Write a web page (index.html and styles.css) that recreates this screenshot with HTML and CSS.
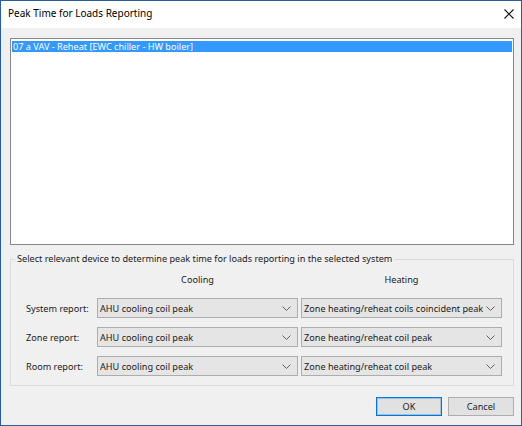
FILE: index.html
```html
<!DOCTYPE html>
<html>
<head>
<meta charset="utf-8">
<title>Peak Time for Loads Reporting</title>
<link rel="stylesheet" href="styles.css">
</head>
<body>
<div class="window">
  <div class="titlebar">
    <span class="title">Peak Time for Loads Reporting</span>
    <span class="close">
      <svg width="10" height="10" viewBox="0 0 10 10"><path d="M0.5 0.5 L9.5 9.5 M9.5 0.5 L0.5 9.5" stroke="#111" stroke-width="1.1" fill="none"/></svg>
    </span>
  </div>
  <div class="content">
    <div class="listbox">
      <div class="item selected">07 a VAV - Reheat [EWC chiller - HW boiler]</div>
    </div>
    <fieldset class="group">
      <legend>Select relevant device to determine peak time for loads reporting in the selected system</legend>
      <div class="grid">
        <div></div>
        <div class="colhead">Cooling</div>
        <div class="colhead">Heating</div>

        <div class="label">System report:</div>
        <div class="combo"><span>AHU cooling coil peak</span><svg class="chev" width="9" height="5" viewBox="0 0 9 5"><path d="M0.5 0.5 L4.5 4.5 L8.5 0.5" stroke="#606060" fill="none"/></svg></div>
        <div class="combo"><span>Zone heating/reheat coils coincident peak</span><svg class="chev" width="9" height="5" viewBox="0 0 9 5"><path d="M0.5 0.5 L4.5 4.5 L8.5 0.5" stroke="#606060" fill="none"/></svg></div>

        <div class="label">Zone report:</div>
        <div class="combo"><span>AHU cooling coil peak</span><svg class="chev" width="9" height="5" viewBox="0 0 9 5"><path d="M0.5 0.5 L4.5 4.5 L8.5 0.5" stroke="#606060" fill="none"/></svg></div>
        <div class="combo"><span>Zone heating/reheat coil peak</span><svg class="chev" width="9" height="5" viewBox="0 0 9 5"><path d="M0.5 0.5 L4.5 4.5 L8.5 0.5" stroke="#606060" fill="none"/></svg></div>

        <div class="label">Room report:</div>
        <div class="combo"><span>AHU cooling coil peak</span><svg class="chev" width="9" height="5" viewBox="0 0 9 5"><path d="M0.5 0.5 L4.5 4.5 L8.5 0.5" stroke="#606060" fill="none"/></svg></div>
        <div class="combo"><span>Zone heating/reheat coil peak</span><svg class="chev" width="9" height="5" viewBox="0 0 9 5"><path d="M0.5 0.5 L4.5 4.5 L8.5 0.5" stroke="#606060" fill="none"/></svg></div>
      </div>
    </fieldset>
    <div class="buttons">
      <button class="btn default">OK</button>
      <button class="btn">Cancel</button>
    </div>
  </div>
</div>
</body>
</html>
```

FILE: styles.css
```css
html, body {
  margin: 0;
  padding: 0;
  background: #f0f0f0;
}
body {
  font-family: "Noto Sans", "Open Sans", sans-serif;
  font-size: 9.15px;
  color: #1a1a1a;
}
.window {
  width: 522px;
  height: 426px;
  box-sizing: border-box;
  border: 1px solid #2f5b98;
  background: #f0f0f0;
  display: flex;
  flex-direction: column;
}
.titlebar {
  height: 27px;
  background: #ffffff;
  display: flex;
  align-items: center;
  justify-content: space-between;
  padding: 0 7px 3px 7px;
  box-sizing: border-box;
}
.title {
  font-size: 10px;
  color: #000;
}
.close {
  display: flex;
  margin-top: 1px;
}
.content {
  padding: 10px 7px 0 9px;
  display: flex;
  flex-direction: column;
}
.listbox {
  height: 207px;
  box-sizing: border-box;
  border: 1px solid #828790;
  background: #ffffff;
  padding: 2px 1px 1px 1px;
}
.item {
  height: 11px;
  line-height: 11px;
  padding-left: 1px;
  white-space: nowrap;
}
.item.selected {
  background: #3399ff;
  color: #ffffff;
}
.group {
  margin: 7px 0 0 0;
  padding: 7px 13px 9px 15px;
  border: 1px solid #dcdcdc;
  min-width: 0;
}
.group legend {
  margin-left: -11px;
  padding: 0 2px;
  line-height: 14px;
  color: #1a1a1a;
}
.grid {
  display: grid;
  grid-template-columns: 68px 201px 201px;
  column-gap: 3px;
  row-gap: 9px;
}
.colhead {
  text-align: center;
  line-height: 14px;
  margin-bottom: 2px;
}
.label {
  display: flex;
  align-items: center;
  height: 20px;
  white-space: nowrap;
}
.combo {
  height: 20px;
  box-sizing: border-box;
  border: 1px solid #adadad;
  background: #e5e5e5;
  display: flex;
  align-items: center;
  justify-content: space-between;
  padding: 0 6px 0 2px;
  white-space: nowrap;
}
.chev {
  flex: none;
}
.buttons {
  display: flex;
  justify-content: flex-end;
  gap: 6px;
  margin-top: 11px;
}
.btn {
  width: 66px;
  height: 19px;
  box-sizing: border-box;
  border: 1px solid #adadad;
  background: #e1e1e1;
  font-family: inherit;
  font-size: 9.15px;
  color: #1a1a1a;
  padding: 0;
}
.btn.default {
  border-color: #0078d7;
  box-shadow: inset 0 0 0 1px rgba(0, 120, 215, 0.3);
}
```
